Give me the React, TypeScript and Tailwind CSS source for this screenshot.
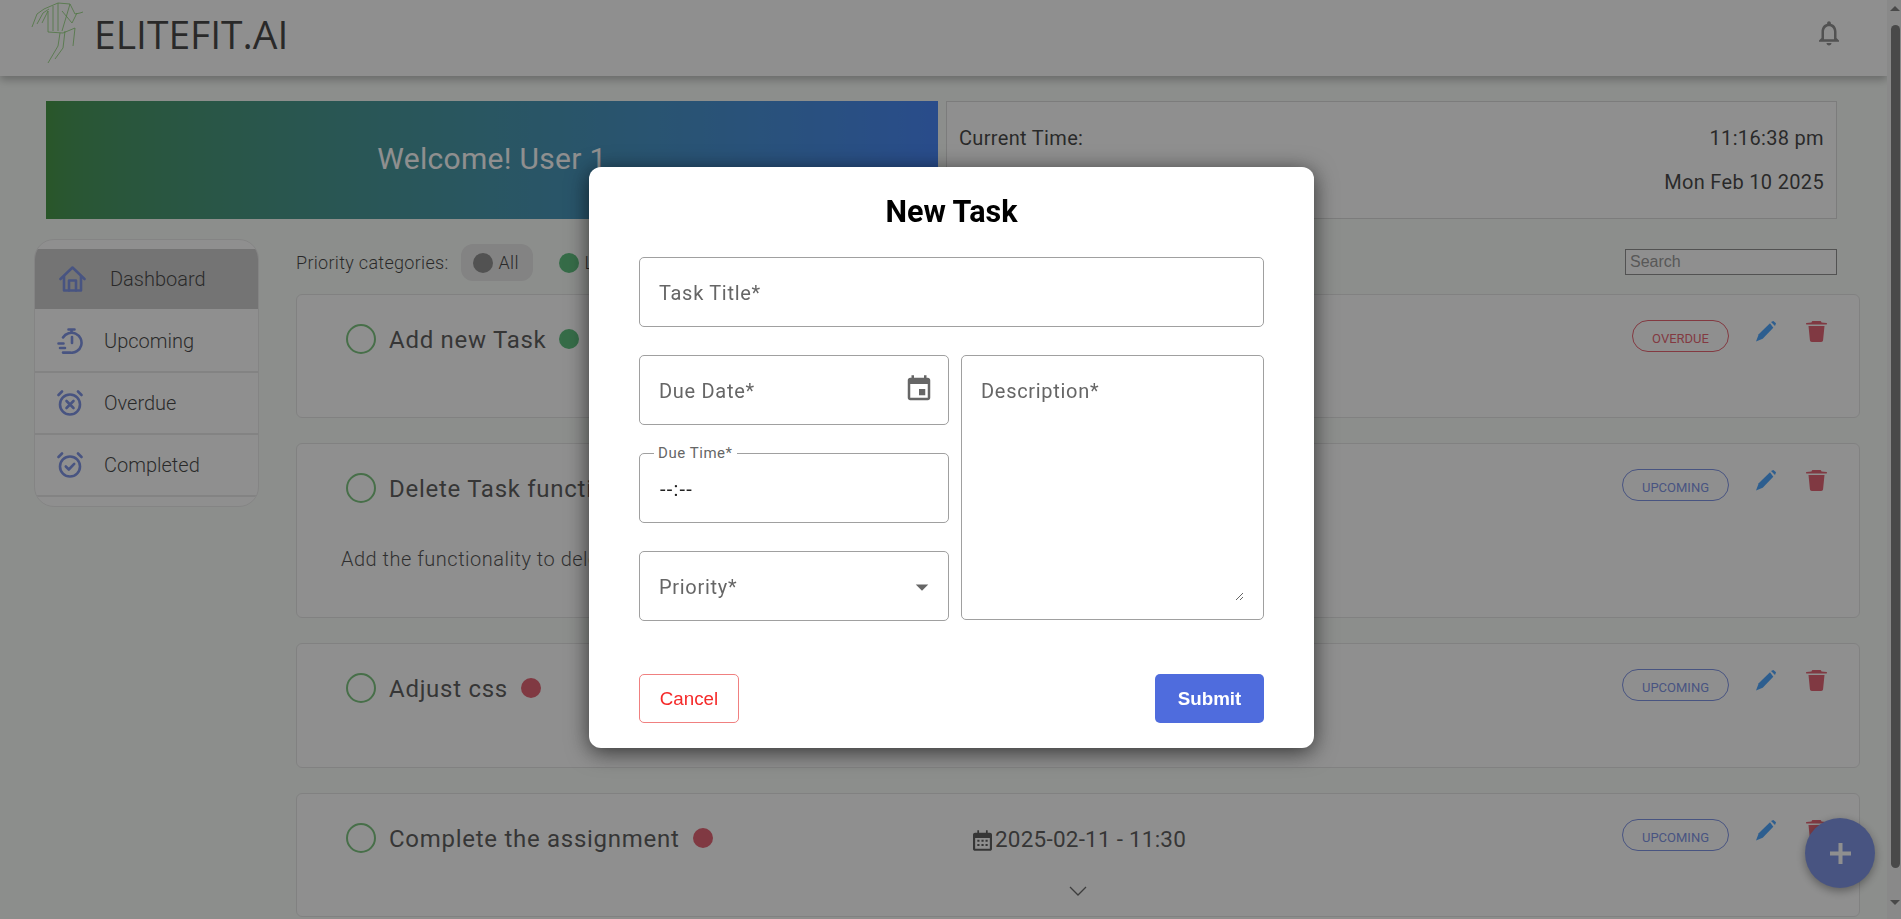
import React from 'react';

const tasks = [
  { id: 1, title: 'Add new Task', dot: 'bg-[#22a94f]', status: 'OVERDUE', height: 'h-[124px]', date: '2025-02-09 - 10:00', description: '' },
  { id: 2, title: 'Delete Task functionality', dot: 'bg-[#22a94f]', status: 'UPCOMING', height: 'h-[175px]', date: '2025-02-12 - 09:00', description: 'Add the functionality to delete tasks' },
  { id: 3, title: 'Adjust css', dot: 'bg-[#d9293f]', status: 'UPCOMING', height: 'h-[125px]', date: '2025-02-11 - 10:30', description: '' },
  { id: 4, title: 'Complete the assignment', dot: 'bg-[#d9293f]', status: 'UPCOMING', height: 'h-[124px]', date: '2025-02-11 - 11:30', description: '' },
];

const HomeIcon = () => (
  <svg className="w-[27px] h-[26px]" viewBox="0 0 27 26" fill="none" stroke="#4f6cdd" strokeWidth="2.6" strokeLinejoin="round" strokeLinecap="round">
    <path d="M1.5 13 13.5 1.5 25.5 13" />
    <path d="M5 10.5V24.5H22V10.5" />
    <path d="M10 24.5V14.5H17V24.5" />
  </svg>
);

const TimerIcon = () => (
  <svg className="w-[26px] h-[26px]" viewBox="0 0 26 26" fill="none" stroke="#4f6cdd" strokeWidth="2.6" strokeLinecap="round">
    <path d="M11.5 1.5h6M14.5 1.5v3" />
    <path d="M6 9.5A10 10 0 1 1 13 24.6H6" />
    <path d="M15 9v6" />
    <path d="M1.5 15.5h5M3 20h5" />
  </svg>
);

const AlarmIcon = ({ check }: { check?: boolean }) => (
  <svg className="w-[26px] h-[26px]" viewBox="0 0 26 26" fill="none" stroke="#4f6cdd" strokeWidth="2.6" strokeLinecap="round" strokeLinejoin="round">
    <circle cx="13" cy="14.5" r="10" />
    <path d="M1.5 5 5 1.5M24.5 5 21 1.5" />
    {check ? <path d="M8.8 14.5l3 3 5.4-5.6" /> : <path d="M9.5 11l7 7M16.5 11l-7 7" />}
  </svg>
);

const PencilIcon = () => (
  <svg className="w-5 h-[21px]" viewBox="0 0 20 21" fill="#0a84ff">
    <path d="M0 20.6 2.7 13.3 14 2.3 17.3 6.7 6.7 17.7Z" />
    <path d="M15 1 17.3 0 20 2.3 19 5Z" />
  </svg>
);

const TrashIcon = () => (
  <svg className="w-[21px] h-[21px]" viewBox="0 0 21 21" fill="#d9293f">
    <path d="M5.5 1.5C5.5.6 6.2 0 7 0h7c.8 0 1.500.6 1.500 1.500L20.500 2c.4 0 .5.300.5.700s-.2.800-.5.800H.5C.2 3.500 0 3.100 0 2.700S.2 2 .5 2Z" />
    <path d="M2.500 5h16l-1.400 14c-.1 1.100-.8 2-2 2H5.900c-1.200 0-1.900-.9-2-2Z" />
  </svg>
);

const Logo = () => (
  <svg className="w-[56px] h-[64px]" viewBox="30 0 56 64" fill="none" stroke="#5fc040" strokeWidth="0.8">
    <path d="M32 26 37 13 44 8 58 2 70 3 75 13 80 12 83 11" />
    <path d="M37 23 43 12 49 8" />
    <path d="M42 22 48 10" />
    <path d="M48 10V31L63 32 75 27 73 45" />
    <path d="M65 30 63 47 55 58" />
    <path d="M60 32 58 45 48 62" />
    <path d="M58 2V30" />
    <path d="M53 5V30" />
    <path d="M70 3 62 30" />
    <path d="M62 10 72 22 77 12" />
  </svg>
);

const Field = ({ placeholder }: { placeholder: string }) => (
  <input
    placeholder={placeholder}
    className="w-full h-[70px] pl-[19px] pr-5 pt-[2px] border border-[#a0a0a0] rounded-[5px] outline-none text-[20px] tracking-[0.7px] placeholder:text-[#666] font-[Roboto]"
  />
);

const TaskCard = ({ task }: { task: (typeof tasks)[number] }) => (
  <div className={`${task.height} bg-white border border-[#dcdcdc] rounded-[6px] flex flex-col`}>
    <div className="flex pt-[25px] pr-[32px]">
      <div className="w-[676px] h-[35px] pl-[49px] pt-[3px] flex items-center">
        <div className="w-[30px] h-[30px] rounded-full border-2 border-[#4caf50]" />
        <span className="ml-[13px] pt-[2px] leading-[30px] text-[24px] text-[#222] tracking-[0.03em]">{task.title}</span>
        <span className={`ml-[13px] w-5 h-5 rounded-full ${task.dot}`} />
      </div>
      <div className="pt-[6px] h-[36px] flex items-center text-[22.5px] text-[#222] tracking-[0.01em]">
        <svg className="w-[19px] h-[21px] mr-[3px]" viewBox="0 0 22 24" fill="#222">
          <path d="M5 0h2v3h8V0h2v3h2.500C21 3 22 4 22 5.500V21.500C22 23 21 24 19.500 24H2.500C1 24 0 23 0 21.500V5.500C0 4 1 3 2.500 3H5ZM2.500 9v12.500h17V9ZM5 11h2.500v2.500H5Zm4.800 0h2.500v2.500H9.800Zm4.700 0H17v2.500h-2.500ZM5 16h2.500v2.500H5Zm4.800 0h2.500v2.500H9.800Zm4.700 0H17v2.500h-2.500Z" />
        </svg>
        {task.date}
      </div>
      <div className="ml-auto flex items-start">
        <span
          className={`h-8 rounded-full border flex items-center justify-center pt-[5px] text-[13px] ${
            task.status === 'OVERDUE' ? 'w-[97px] border-[#e0283c] text-[#e0283c]' : 'w-[107px] border-[#4f6cdd] text-[#4f6cdd]'
          }`}
        >
          {task.status}
        </span>
        <span className="ml-[27px] mt-[1px]"><PencilIcon /></span>
        <span className="ml-[30px] mt-[1px]"><TrashIcon /></span>
      </div>
    </div>
    {task.description && <p className="ml-[44px] mt-[39px] text-[20px] font-light text-[#111] tracking-[0.5px]">{task.description}</p>}
    <svg className="self-center mt-[31px] w-[18px] h-[10px]" viewBox="0 0 18 10" fill="none" stroke="#333" strokeWidth="1.3">
      <path d="M1 1l8 8 8-8" />
    </svg>
  </div>
);

export default function App() {
  return (
    <div className="h-screen w-full overflow-hidden flex bg-[#f8fdf8] text-[#000] font-[Roboto,sans-serif]">
      <div className="flex-1 min-w-0 flex flex-col">
        <header className="h-[76px] shrink-0 bg-white shadow-[0_4px_8px_rgba(0,0,0,0.35)] flex items-center pl-[30px] pr-[43px] pb-[10px]">
          <Logo />
          <span className="ml-[8px] text-[39px] leading-none text-black font-['Open_Sans',sans-serif]">ELITEFIT.AI</span>
          <svg className="ml-auto w-[30px] h-[30px]" viewBox="0 0 24 24" fill="#666">
            <path d="M12 22c1.100 0 2-.9 2-2h-4c0 1.100.9 2 2 2zm6-6v-5c0-3.070-1.630-5.640-4.500-6.320V4c0-.83-.67-1.500-1.500-1.500s-1.500.67-1.500 1.500v.68C7.640 5.360 6 7.920 6 11v5l-2 2v1h16v-1l-2-2zm-2 1H8v-6c0-2.480 1.510-4.500 4-4.500s4 2.020 4 4.500v6z" />
          </svg>
        </header>

        <div className="mt-[25px] ml-[46px] mr-[50px] h-[118px] flex gap-2 shrink-0">
          <div className="w-[892px] pb-[4px] bg-gradient-to-r from-[#007000] to-[#0058f5] flex items-center justify-center text-white text-[30px] tracking-[0.3px]">
            Welcome! User 1
          </div>
          <div className="flex-1 border border-[#d0d0d0] bg-white flex flex-col justify-center gap-[24px] px-[12px] text-[20px] text-black leading-[20px] tracking-[0.33px]">
            <div className="flex justify-between"><span>Current Time:</span><span>11:16:38 pm</span></div>
            <div className="flex justify-between"><span>Current Date:</span><span>Mon Feb 10 2025</span></div>
          </div>
        </div>

        <div className="mt-5 flex items-start">
          <nav className="ml-[34px] w-[225px] h-[268px] rounded-[20px] bg-white border border-[#e4e4e4] overflow-hidden pt-[9px] shrink-0 text-[20px] font-light text-black">
            <div className="h-[60px] mb-[2px] bg-[#bcbcbc] flex items-center pl-[24px] gap-[24px]"><HomeIcon />Dashboard</div>
            <div className="h-[62px] border-b-2 border-[#e0e0e0] flex items-center pl-[22px] gap-[21px]"><TimerIcon />Upcoming</div>
            <div className="h-[62px] border-b-2 border-[#e0e0e0] flex items-center pl-[22px] gap-[21px]"><AlarmIcon />Overdue</div>
            <div className="h-[62px] border-b-2 border-[#e0e0e0] flex items-center pl-[22px] gap-[21px]"><AlarmIcon check />Completed</div>
          </nav>

          <main className="ml-[37px] w-[1564px] shrink-0">
            <div className="h-[47px] mb-2 flex items-center text-[18px] font-light text-black tracking-[0.3px]">
              <span>Priority categories:</span>
              <span className="ml-[12px] h-[37px] w-[72px] rounded-[12px] bg-[#e0e0e0] flex items-center pl-3 gap-[6px]">
                <span className="w-5 h-5 rounded-full bg-[#666]" />All
              </span>
              <span className="ml-[26px] flex items-center gap-[6px]">
                <span className="w-5 h-5 rounded-full bg-[#22a94f]" />Low
              </span>
              <input
                placeholder="Search"
                className="ml-auto -mt-[2px] mr-[23px] w-[212px] h-[26px] px-[4px] border border-[#666] bg-white text-[16px] tracking-normal font-['Liberation_Sans',sans-serif] placeholder:text-[#757575]"
              />
            </div>
            <div className="flex flex-col gap-[25px]">
              {tasks.map((task) => (
                <TaskCard key={task.id} task={task} />
              ))}
            </div>
          </main>
        </div>

        <button className="fixed left-[1805px] top-[818px] w-[70px] h-[70px] rounded-full bg-[#4f6cdd] shadow-[0_3px_10px_rgba(0,0,0,0.5)] flex items-center justify-center">
          <svg className="w-[21px] h-[21px]" viewBox="0 0 21 21" fill="white">
            <path d="M8.500 0h4v8.500H21v4h-8.500V21h-4v-8.500H0v-4h8.500Z" />
          </svg>
        </button>
      </div>

      <div className="w-[14px] shrink-0 flex flex-col items-center bg-[#f1f1f1] pl-[2px]">
        <div className="mt-[6px] w-0 h-0 border-x-[5px] border-x-transparent border-b-[5px] border-b-[#505050]" />
        <div className="mt-[14px] w-[9px] h-[843px] rounded-[5px] bg-[#505050]" />
        <div className="mt-[32px] w-0 h-0 border-x-[5px] border-x-transparent border-t-[5px] border-t-[#505050]" />
      </div>

      <div className="fixed inset-0 bg-[#444]/60 flex items-center justify-center font-[Roboto,sans-serif]">
        <div className="w-[725px] h-[581px] -mt-[4px] ml-[2px] bg-white rounded-[12px] shadow-[0_4px_22px_rgba(0,0,0,0.65)] px-[50px] pt-[29px]">
          <h2 className="h-8 leading-8 text-center text-[30.5px] font-bold text-black">New Task</h2>
          <div className="mt-[29px]">
            <Field placeholder="Task Title*" />
          </div>
          <div className="mt-7 flex gap-[12px]">
            <div className="w-[310px] flex flex-col gap-[28px]">
              <div className="relative">
                <Field placeholder="Due Date*" />
                <svg className="absolute right-[15px] top-[19px] w-[30px] h-[30px]" viewBox="0 0 24 24" fill="#666">
                  <path d="M17 12h-5v5h5v-5zM16 1v2H8V1H6v2H5c-1.110 0-1.990.9-1.990 2L3 19c0 1.100.89 2 2 2h14c1.100 0 2-.9 2-2V5c0-1.100-.9-2-2-2h-1V1h-2zm3 18H5V8h14v11z" />
                </svg>
              </div>
              <div className="relative h-[70px] border border-[#a0a0a0] rounded-[5px] flex items-center px-5 pt-[2px]">
                <span className="absolute left-[14px] -top-[10px] bg-white px-[4px] text-[15px] leading-[18px] text-[#666] tracking-[0.55px]">Due Time*</span>
                <span className="text-[20px] text-[#222] tracking-[1.2px]">--:--</span>
              </div>
              <div className="h-[70px] border border-[#a0a0a0] rounded-[5px] flex items-center justify-between pl-[19px] pr-[11px] pt-[1px] text-[20px] text-[#666] tracking-[0.7px]">
                Priority*
                <svg className="w-[30px] h-[30px]" viewBox="0 0 24 24" fill="#666"><path d="M7 10l5 5 5-5z" /></svg>
              </div>
            </div>
            <div className="flex-1 h-[265px] border border-[#a0a0a0] rounded-[5px] pt-[21px] pl-[19px] pr-[19px]">
              <textarea
                placeholder="Description*"
                className="w-full h-[224px] outline-none text-[20px] leading-[29px] tracking-[0.7px] placeholder:text-[#666]"
              />
            </div>
          </div>
          <div className="mt-[53px] flex justify-between font-['Liberation_Sans',sans-serif] text-[18.75px]">
            <button className="w-[100px] h-[49px] pt-[1px] rounded-[5px] border border-[#f08080] text-[#f52a2a]">Cancel</button>
            <button className="w-[109px] h-[49px] pt-[1px] rounded-[5px] bg-[#4f6cdd] text-white font-bold">Submit</button>
          </div>
        </div>
      </div>
    </div>
  );
}
